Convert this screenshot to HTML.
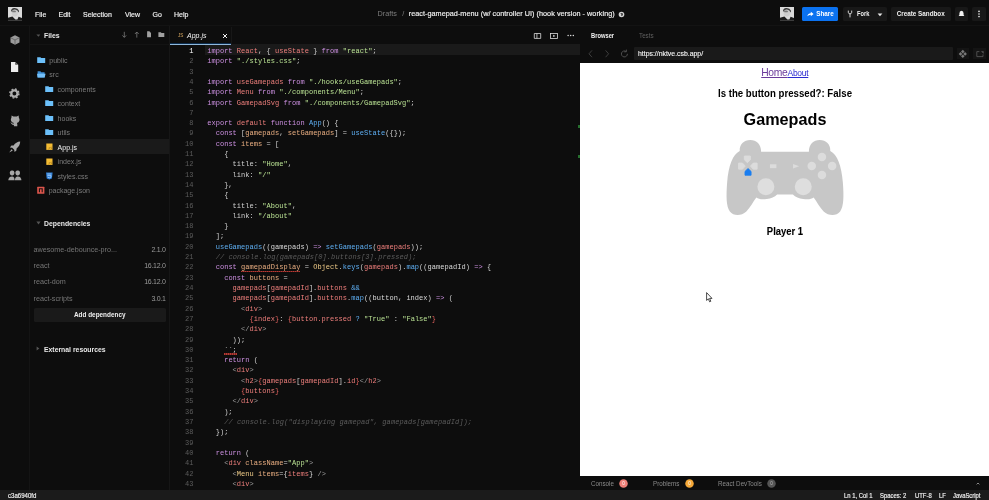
<!DOCTYPE html>
<html lang="en">
<head>
<meta charset="utf-8">
<title>react-gamepad-menu - CodeSandbox</title>
<style>
*{box-sizing:border-box;margin:0;padding:0}
html,body{width:989px;height:500px;overflow:hidden;background:#0d0d0d}
body{font-family:"Liberation Sans",sans-serif;font-size:7px;color:#ccc;position:relative;-webkit-font-smoothing:antialiased}
.a{position:absolute;white-space:nowrap}
.t{position:absolute;white-space:nowrap;line-height:10px;height:10px}
#hdr{left:0;top:0;width:989px;height:26px;background:#0d0d0d;border-bottom:1px solid #131313}
#act{left:0;top:26px;width:30px;height:464px;background:#0d0d0d;border-right:1px solid #141414}
#side{left:30px;top:26px;width:140px;height:464px;background:#0d0d0d;border-right:1px solid #161616}
#ed{left:170px;top:26px;width:410px;height:464px;background:#0d0d0d}
#status{left:0;top:490px;width:989px;height:10px;background:#1b1b1b}
#prev{left:580px;top:26px;width:409px;height:464px;background:#0d0d0d}
#white{left:580px;top:63px;width:409px;height:413px;background:#fff;color:#000}
.menu{color:#f0f0f0;font-size:7px;top:9.6px;-webkit-text-stroke:0.15px #f0f0f0}
.btn{position:absolute;top:7px;height:14px;border-radius:1.5px;background:#181818;color:#f0f0f0;font-size:6.3px;font-weight:bold;line-height:14.3px;text-align:center;white-space:nowrap}
.row{position:absolute;left:0;width:139px;height:14.5px}
.fn{position:absolute;font-size:7px;line-height:10px;color:#858585;white-space:nowrap}
.ln{position:absolute;left:170px;width:23.5px;text-align:right;font-family:"Liberation Mono",monospace;font-size:7px;line-height:10.3px;height:10.3px;color:#5c5c5c}
.ln.cur{color:#fff}
.cl{position:absolute;left:207.2px;font-family:"Liberation Mono",monospace;font-size:7px;line-height:10.3px;height:10.3px;white-space:pre;color:#d0d0d0;letter-spacing:0.035px}
.k{color:#cb8fe0}.v{color:#ee7f7c}.s{color:#b8e092}.f{color:#5eaef2}.o{color:#e8ad80}.y{color:#f0cc88}.p{color:#dadada}.b{color:#e0605c}
.cl .t{position:static;color:#ee7f7c;height:auto;line-height:inherit}
.g{color:#9c9c9c}
.c{color:#5c5c5c;font-style:italic;letter-spacing:0.075px}
.sq,.sq2{position:relative}
.sq::after,.sq2::after{content:'';position:absolute;left:0;right:0;top:7.6px;height:1.4px;background:repeating-linear-gradient(90deg,#b63a34 0,#b63a34 1px,#7a2622 1px,#7a2622 2px)}
.dep{position:absolute;left:4px;width:131.5px;height:10px;font-size:7px;line-height:10px;color:#8f8f8f}
.dep b{position:absolute;right:0;font-weight:normal}
.sb{position:absolute;top:491.4px;height:10px;line-height:10px;font-size:6.3px;color:#f4f4f4;white-space:nowrap;transform:scaleX(.935);transform-origin:0 0;-webkit-text-stroke:0.15px #f4f4f4}
.bt{position:absolute;top:478.7px;transform:scaleX(.95);transform-origin:0 0;height:10px;line-height:10px;font-size:6.6px;color:#8a8a8a;white-space:nowrap}
.badge{position:absolute;top:479.2px;width:8.6px;height:8.6px;border-radius:50%;font-size:4.6px;line-height:8.6px;text-align:center;color:#fff}
</style>
</head>
<body>
<div id="root" style="position:absolute;left:0;top:0;width:989px;height:500px;will-change:transform">
<div class="a" id="hdr"></div>
<div class="a" id="act"></div>
<div class="a" id="side"></div>
<div class="a" id="ed"></div>
<div class="a" id="prev"></div>
<div class="a" id="status"></div>

<!-- header -->
<svg class="a" style="left:8px;top:7.4px" width="14" height="13.4" viewBox="0 0 14 13.4">
  <rect width="14" height="13.4" fill="#dadada"/>
  <ellipse cx="6.8" cy="5.8" rx="3.2" ry="3.6" fill="#cdcdcd"/>
  <path d="M3 4.2 Q3.2 1.2 6 1 Q9.8 0.6 10.9 3.6 Q11.1 5 10.5 5.6 Q10 3 7 2.6 Q4.6 2.4 3.8 4.6Z" fill="#3c3c3c"/>
  <ellipse cx="6" cy="4.4" rx="2" ry="0.9" fill="#777"/>
  <path d="M0 13.4 V10.8 L4.4 9.6 L7.4 12.4 L9.4 12.6 L10.6 9.8 L14 11 V13.4Z" fill="#1c1c1c"/>
</svg>
<div class="t menu" style="left:35px">File</div>
<div class="t menu" style="left:58.5px">Edit</div>
<div class="t menu" style="left:83px">Selection</div>
<div class="t menu" style="left:125px">View</div>
<div class="t menu" style="left:152.5px">Go</div>
<div class="t menu" style="left:174px">Help</div>

<div class="t" style="left:377.6px;top:9.2px;font-size:7.25px;color:#7d7d7d">Drafts</div>
<div class="t" style="left:402.3px;top:9.2px;font-size:7.25px;color:#7d7d7d">/</div>
<div class="t" style="left:408.7px;top:9.2px;font-size:7.25px;letter-spacing:0.035px;color:#f2f2f2;-webkit-text-stroke:0.15px #f2f2f2">react-gamepad-menu (w/ controller UI) (hook version - working)</div>
<svg class="a" style="left:617.5px;top:10.8px" width="7" height="7" viewBox="0 0 7 7"><circle cx="3.5" cy="3.5" r="2.8" fill="#d0d0d0"/><path d="M2 2.2 L3.4 3 L3 4.4 L4.2 5 L5 3.4 L4.4 2Z" fill="#333"/></svg>

<svg class="a" style="left:780px;top:7.4px" width="14" height="13.4" viewBox="0 0 14 13.4">
  <rect width="14" height="13.4" fill="#dadada"/>
  <ellipse cx="6.8" cy="5.8" rx="3.2" ry="3.6" fill="#cdcdcd"/>
  <path d="M3 4.2 Q3.2 1.2 6 1 Q9.8 0.6 10.9 3.6 Q11.1 5 10.5 5.6 Q10 3 7 2.6 Q4.6 2.4 3.8 4.6Z" fill="#3c3c3c"/>
  <ellipse cx="6" cy="4.4" rx="2" ry="0.9" fill="#777"/>
  <path d="M0 13.4 V10.8 L4.4 9.6 L7.4 12.4 L9.4 12.6 L10.6 9.8 L14 11 V13.4Z" fill="#1c1c1c"/>
</svg>
<div class="btn" style="left:802px;width:36px;background:#0b72f0;color:#fff;padding-left:10px">Share</div>
<svg class="a" style="left:807px;top:11px" width="7" height="6" viewBox="0 0 7 6"><path d="M0.3 5.2 Q1 2.4 3.8 2.3 L3.8 0.8 L6.6 3 L3.8 5.2 L3.8 3.7 Q1.8 3.6 0.3 5.2Z" fill="#fff"/></svg>
<div class="btn" style="left:842.5px;width:44px"><span style="position:absolute;left:14px;transform:scaleX(.9);transform-origin:0 0">Fork</span></div>
<svg class="a" style="left:847.3px;top:10px" width="6" height="8" viewBox="0 0 6 8"><path d="M1.3 0.6 V2.4 Q1.3 3.6 3 3.9 Q4.7 3.6 4.7 2.4 V0.6 M3 3.9 V7.4" stroke="#e8e8e8" stroke-width="0.9" fill="none"/></svg>
<svg class="a" style="left:877px;top:13px" width="6" height="4" viewBox="0 0 6 4"><path d="M0.6 0.5 H5.4 L3 3.2Z" fill="#e8e8e8"/></svg>
<div class="btn" style="left:891px;width:59.5px">Create Sandbox</div>
<div class="btn" style="left:954.5px;width:13.5px"></div>
<svg class="a" style="left:958px;top:10px" width="7" height="8" viewBox="0 0 7 8"><path d="M3.5 0.8 Q5.6 1 5.6 3.4 V5 L6.4 6 H0.6 L1.4 5 V3.4 Q1.4 1 3.5 0.8Z" fill="#f2f2f2"/></svg>
<div class="btn" style="left:972px;width:13.5px"></div>
<svg class="a" style="left:977px;top:10px" width="4" height="8" viewBox="0 0 4 8"><circle cx="2" cy="1.4" r="0.8" fill="#f2f2f2"/><circle cx="2" cy="4" r="0.8" fill="#f2f2f2"/><circle cx="2" cy="6.6" r="0.8" fill="#f2f2f2"/></svg>

<!-- activity bar -->
<svg class="a" style="left:9.5px;top:34.6px" width="10" height="10" viewBox="0 0 10 10"><path d="M5 0.3 L9.5 2.6 V7.4 L5 9.8 L0.5 7.4 V2.6Z" fill="#9a9a9a"/><path d="M0.8 2.8 L5 5 L9.2 2.8 M5 5 V9.6" stroke="#4a4a4a" stroke-width="0.6" fill="none"/></svg>
<svg class="a" style="left:10px;top:61px" width="10" height="12" viewBox="0 0 10 12"><path d="M1 1 H5.2 L8.2 3.8 V11 H1Z" fill="#ececec"/><path d="M5.2 1 V3.8 H8.2Z" fill="#555"/></svg>
<svg class="a" style="left:9px;top:88.2px" width="11" height="11" viewBox="0 0 11 11"><circle cx="5.4" cy="5.5" r="3.1" fill="none" stroke="#adadad" stroke-width="2.3"/><circle cx="5.4" cy="5.5" r="4.5" fill="none" stroke="#adadad" stroke-width="1.5" stroke-dasharray="1.77 1.77"/></svg>
<svg class="a" style="left:10px;top:114.6px" width="11" height="12" viewBox="0 0 11 12"><path d="M1.6 0.6 L3.4 1.6 Q5.1 1.2 6.8 1.6 L8.6 0.6 L8.9 2.8 Q9.9 4.2 9.4 5.8 Q8.8 7.6 6.9 8 Q7.4 8.6 7.3 9.6 L7.3 11.2 H3.9 V9.8 Q2.2 10.3 1.4 8.8 Q1 8 0.3 7.6 Q1.4 7.2 2.2 8.2 Q2.8 8.9 3.6 8.6 Q3.7 8.2 3.9 8 Q1.6 7.6 1 5.8 Q0.5 4.2 1.4 2.8Z" fill="#a6a6a6"/></svg>
<svg class="a" style="left:9px;top:141.4px" width="12" height="12" viewBox="0 0 12 12"><path d="M11.2 0.6 C8.4 0.8 6.2 2.2 4.6 4.4 L2.4 4.6 L0.9 6.4 L3.2 6.8 L5.2 8.8 L5.6 11.1 L7.4 9.6 L7.6 7.4 C9.8 5.8 11.2 3.6 11.2 0.6Z M2.6 8.2 L0.2 11.4 L3.8 9.4Z" fill="#a8a8a8"/></svg>
<svg class="a" style="left:7.6px;top:169.6px" width="14" height="11" viewBox="0 0 14 11"><rect x="1.9" y="0.4" width="4.4" height="5" rx="1.8" fill="#a6a6a6"/><rect x="7.5" y="0.4" width="4.4" height="5" rx="1.8" fill="#a6a6a6"/><path d="M0.3 10.2 Q0.5 6.4 4.1 6.4 Q6.6 6.4 6.6 10.2Z" fill="#a6a6a6"/><path d="M6.9 10.2 Q7 6.4 9.7 6.4 Q13.3 6.4 13.4 10.2Z" fill="#a6a6a6"/></svg>

<!-- sidebar -->
<div class="a" style="left:30px;top:44px;width:139px;height:1px;background:#131313"></div>
<svg class="a" style="left:35.6px;top:33.8px" width="5" height="4" viewBox="0 0 5 4"><path d="M0.4 0.4 H4.4 L2.4 2.8Z" fill="#555"/></svg>
<div class="t" style="left:44px;top:30.8px;font-size:6.9px;font-weight:bold;color:#e8e8e8">Files</div>
<svg class="a" style="left:120px;top:30px" width="46" height="9" viewBox="0 0 46 9">
  <path d="M4.3 1.8 V7.2 M2.4 5.4 L4.3 7.4 L6.2 5.4" stroke="#8a8a8a" stroke-width="0.7" fill="none"/>
  <path d="M16.8 7.6 V2.2 M14.9 4 L16.8 2 L18.7 4" stroke="#8a8a8a" stroke-width="0.7" fill="none"/>
  <path d="M27.1 1.3 H29.4 L31 2.9 V7.2 H27.1Z" fill="#a0a0a0"/>
  <path d="M38.4 2.3 H40.8 L41.5 3.1 H44.3 V7.1 H38.4Z" fill="#a0a0a0"/>
</svg>

<div class="a" id="tree" style="left:30px;top:0;width:139px;height:0">
  <div class="row" style="top:139px;left:0;width:139px;height:15px;background:#1a1a1a"></div>
</div>
<svg class="a" style="left:37.0px;top:55.8px" width="9" height="8" viewBox="0 0 9 8"><path d="M0.2 1.2 H3.4 L4.2 2 H8.2 V7 H0.2Z" fill="#6cc0fa"/></svg>
<div class="fn" style="left:49.3px;top:56px;color:#7c7c7c">public</div>
<svg class="a" style="left:36.5px;top:70.3px" width="9" height="8" viewBox="0 0 9 8"><path d="M0.6 1.2 H3.4 L4.2 2.2 H7.6 V7.4 H0.6Z" fill="#3d8fd6"/><path d="M0 3.8 H8.6 L7.6 7.4 H0.6Z" fill="#74bff8"/></svg>
<div class="fn" style="left:49.3px;top:70px;color:#7c7c7c">src</div>
<svg class="a" style="left:45.3px;top:84.8px" width="9" height="8" viewBox="0 0 9 8"><path d="M0.2 1.2 H3.4 L4.2 2 H8.2 V7 H0.2Z" fill="#6cc0fa"/></svg>
<div class="fn" style="left:57.6px;top:85px;color:#7c7c7c">components</div>
<svg class="a" style="left:45.3px;top:99.3px" width="9" height="8" viewBox="0 0 9 8"><path d="M0.2 1.2 H3.4 L4.2 2 H8.2 V7 H0.2Z" fill="#6cc0fa"/></svg>
<div class="fn" style="left:57.6px;top:99px;color:#7c7c7c">context</div>
<svg class="a" style="left:45.3px;top:113.8px" width="9" height="8" viewBox="0 0 9 8"><path d="M0.2 1.2 H3.4 L4.2 2 H8.2 V7 H0.2Z" fill="#6cc0fa"/></svg>
<div class="fn" style="left:57.6px;top:114px;color:#7c7c7c">hooks</div>
<svg class="a" style="left:45.3px;top:128.3px" width="9" height="8" viewBox="0 0 9 8"><path d="M0.2 1.2 H3.4 L4.2 2 H8.2 V7 H0.2Z" fill="#6cc0fa"/></svg>
<div class="fn" style="left:57.6px;top:128px;color:#7c7c7c">utils</div>
<svg class="a" style="left:46.0px;top:143.4px" width="7" height="7" viewBox="0 0 7 7"><rect x="0.3" y="0.5" width="6.2" height="6.4" fill="#f4bc34"/><path d="M3.3 4 V5.6 Q3.2 6.2 2.5 6.1 M5.7 4.2 Q4.6 3.9 4.7 4.6 Q4.8 5 5.4 5.2 Q5.9 5.8 4.7 6" stroke="#8a6414" stroke-width="0.5" fill="none"/></svg>
<div class="fn" style="left:57.6px;top:143px;color:#f2f2f2">App.js</div>
<svg class="a" style="left:46.0px;top:157.9px" width="7" height="7" viewBox="0 0 7 7"><rect x="0.3" y="0.5" width="6.2" height="6.4" fill="#f4bc34"/><path d="M3.3 4 V5.6 Q3.2 6.2 2.5 6.1 M5.7 4.2 Q4.6 3.9 4.7 4.6 Q4.8 5 5.4 5.2 Q5.9 5.8 4.7 6" stroke="#8a6414" stroke-width="0.5" fill="none"/></svg>
<div class="fn" style="left:57.6px;top:157px;color:#7c7c7c">index.js</div>
<svg class="a" style="left:45.8px;top:171.8px" width="7" height="8" viewBox="0 0 7 8"><path d="M0 0.6 H6.6 L5.9 6.4 L3.3 7.4 L0.7 6.4Z" fill="#2f80d8"/><path d="M1.3 2 H5.3 M1.4 3.6 H5.1 L4.9 5.2 L3.3 5.8 L1.7 5.2" stroke="#bcdcff" stroke-width="0.7" fill="none"/></svg>
<div class="fn" style="left:57.6px;top:172px;color:#7c7c7c">styles.css</div>
<svg class="a" style="left:37.0px;top:186.3px" width="8" height="8" viewBox="0 0 8 8"><rect x="0.2" y="0.8" width="7.2" height="6.9" rx="0.5" fill="#dc564c"/><path d="M2.4 6.2 V2.8 H5.2 V6.2" stroke="#1a1010" stroke-width="1.1" fill="none"/></svg>
<div class="fn" style="left:48.7px;top:186px;color:#7c7c7c">package.json</div>
<svg class="a" style="left:35.5px;top:221px" width="5" height="4" viewBox="0 0 5 4"><path d="M0.4 0.6 H4.6 L2.5 3.4Z" fill="#555"/></svg>
<div class="t" style="left:44px;top:218.7px;font-size:6.85px;font-weight:bold;color:#e8e8e8">Dependencies</div>
<div class="fn" style="left:33.5px;top:245.2px;font-size:7.2px;color:#767676">awesome-debounce-pro...</div>
<div class="fn" style="left:100px;width:65.5px;text-align:right;top:245.2px;letter-spacing:-0.3px;color:#9a9a9a">2.1.0</div>
<div class="fn" style="left:33.5px;top:260.9px;font-size:7.2px;color:#767676">react</div>
<div class="fn" style="left:100px;width:65.5px;text-align:right;top:260.9px;letter-spacing:-0.3px;color:#9a9a9a">16.12.0</div>
<div class="fn" style="left:33.5px;top:277.2px;font-size:7.2px;color:#767676">react-dom</div>
<div class="fn" style="left:100px;width:65.5px;text-align:right;top:277.2px;letter-spacing:-0.3px;color:#9a9a9a">16.12.0</div>
<div class="fn" style="left:33.5px;top:293.6px;font-size:7.2px;color:#767676">react-scripts</div>
<div class="fn" style="left:100px;width:65.5px;text-align:right;top:293.6px;letter-spacing:-0.3px;color:#9a9a9a">3.0.1</div>
<div class="a" style="left:33.5px;top:307.5px;width:132.5px;height:14px;background:#1a1a1a;border-radius:1.5px;color:#f0f0f0;font-size:6.4px;font-weight:bold;line-height:14.6px;text-align:center">Add dependency</div>
<svg class="a" style="left:36px;top:346px" width="4" height="5" viewBox="0 0 4 5"><path d="M0.6 0.4 V4.6 L3.4 2.5Z" fill="#555"/></svg>
<div class="t" style="left:44px;top:344.5px;font-size:6.85px;font-weight:bold;color:#e8e8e8">External resources</div>

<!-- editor tabs -->
<div class="a" style="left:205px;top:44px;width:375px;height:11px;background:#1a1a1a"></div>
<div class="a" style="left:170px;top:43px;width:61px;height:1px;background:#0c2c4c"></div>
<div class="a" style="left:170px;top:44px;width:61px;height:1px;background:#8fb8dc"></div>
<div class="t" style="left:178px;top:31.3px;font-size:4.6px;color:#d8a860">JS</div>
<div class="t" style="left:187px;top:31px;font-size:7px;font-style:italic;color:#f4f4f4">App.js</div>
<svg class="a" style="left:222px;top:33px" width="6" height="6" viewBox="0 0 6 6"><path d="M1 1 L5 5 M5 1 L1 5" stroke="#f0f0f0" stroke-width="1" fill="none"/></svg>
<div class="a" style="left:231px;top:27px;width:1px;height:17px;background:#171717"></div>
<svg class="a" style="left:533px;top:31px" width="44" height="9" viewBox="0 0 44 9">
  <path d="M1.3 2.5 H7.7 V7.4 H1.3Z M3.9 2.5 V7.4" stroke="#dcdcdc" stroke-width="0.8" fill="none"/>
  <rect x="17.5" y="2.5" width="7" height="4.9" stroke="#dcdcdc" stroke-width="0.8" fill="none"/><path d="M20.2 3.8 L22.4 4.95 L20.2 6.1Z" fill="#dcdcdc"/>
  <circle cx="35.1" cy="4.6" r="0.75" fill="#dcdcdc"/><circle cx="37.7" cy="4.6" r="0.75" fill="#dcdcdc"/><circle cx="40.3" cy="4.6" r="0.75" fill="#dcdcdc"/>
</svg>
<div class="ln cur" style="top:46.00px">1</div>
<div class="cl" style="top:46.00px"><span class="k">import</span> <span class="v">React</span>, { <span class="v">useState</span> } <span class="k">from</span> <span class="s">"react"</span>;</div>
<div class="ln" style="top:56.30px">2</div>
<div class="cl" style="top:56.30px"><span class="k">import</span> <span class="s">"./styles.css"</span>;</div>
<div class="ln" style="top:66.61px">3</div>
<div class="ln" style="top:76.91px">4</div>
<div class="cl" style="top:76.91px"><span class="k">import</span> <span class="v">useGamepads</span> <span class="k">from</span> <span class="s">"./hooks/useGamepads"</span>;</div>
<div class="ln" style="top:87.22px">5</div>
<div class="cl" style="top:87.22px"><span class="k">import</span> <span class="v">Menu</span> <span class="k">from</span> <span class="s">"./components/Menu"</span>;</div>
<div class="ln" style="top:97.53px">6</div>
<div class="cl" style="top:97.53px"><span class="k">import</span> <span class="v">GamepadSvg</span> <span class="k">from</span> <span class="s">"./components/GamepadSvg"</span>;</div>
<div class="ln" style="top:107.83px">7</div>
<div class="ln" style="top:118.13px">8</div>
<div class="cl" style="top:118.13px"><span class="k">export</span> <span class="v">default</span> <span class="k">function</span> <span class="f">App</span>() {</div>
<div class="ln" style="top:128.44px">9</div>
<div class="cl" style="top:128.44px">  <span class="k">const</span> [<span class="o">gamepads</span>, <span class="o">setGamepads</span>] = <span class="f">useState</span>({});</div>
<div class="ln" style="top:138.75px">10</div>
<div class="cl" style="top:138.75px">  <span class="k">const</span> <span class="o">items</span> = [</div>
<div class="ln" style="top:149.05px">11</div>
<div class="cl" style="top:149.05px">    {</div>
<div class="ln" style="top:159.35px">12</div>
<div class="cl" style="top:159.35px">      title: <span class="s">"Home"</span>,</div>
<div class="ln" style="top:169.66px">13</div>
<div class="cl" style="top:169.66px">      link: <span class="s">"/"</span></div>
<div class="ln" style="top:179.97px">14</div>
<div class="cl" style="top:179.97px">    },</div>
<div class="ln" style="top:190.27px">15</div>
<div class="cl" style="top:190.27px">    {</div>
<div class="ln" style="top:200.57px">16</div>
<div class="cl" style="top:200.57px">      title: <span class="s">"About"</span>,</div>
<div class="ln" style="top:210.88px">17</div>
<div class="cl" style="top:210.88px">      link: <span class="s">"/about"</span></div>
<div class="ln" style="top:221.19px">18</div>
<div class="cl" style="top:221.19px">    }</div>
<div class="ln" style="top:231.49px">19</div>
<div class="cl" style="top:231.49px">  ];</div>
<div class="ln" style="top:241.79px">20</div>
<div class="cl" style="top:241.79px">  <span class="f">useGamepads</span>((<span class="p">gamepads</span>) <span class="k">=&gt;</span> <span class="f">setGamepads</span>(<span class="v">gamepads</span>));</div>
<div class="ln" style="top:252.10px">21</div>
<div class="cl" style="top:252.10px">  <span class="c">// console.log(gamepads[0].buttons[3].pressed);</span></div>
<div class="ln" style="top:262.40px">22</div>
<div class="cl" style="top:262.40px">  <span class="k">const</span> <span class="o sq">gamepadDisplay</span> = <span class="y">Object</span>.<span class="f">keys</span>(<span class="v">gamepads</span>).<span class="f">map</span>((<span class="p">gamepadId</span>) <span class="k">=&gt;</span> {</div>
<div class="ln" style="top:272.71px">23</div>
<div class="cl" style="top:272.71px">    <span class="k">const</span> <span class="o">buttons</span> =</div>
<div class="ln" style="top:283.01px">24</div>
<div class="cl" style="top:283.01px">      <span class="v">gamepads</span>[<span class="v">gamepadId</span>].<span class="v">buttons</span> <span class="f">&amp;&amp;</span></div>
<div class="ln" style="top:293.32px">25</div>
<div class="cl" style="top:293.32px">      <span class="v">gamepads</span>[<span class="v">gamepadId</span>].<span class="v">buttons</span>.<span class="f">map</span>((<span class="p">button</span>, <span class="p">index</span>) <span class="k">=&gt;</span> (</div>
<div class="ln" style="top:303.62px">26</div>
<div class="cl" style="top:303.62px">        <span class="g">&lt;</span><span class="t">div</span><span class="g">&gt;</span></div>
<div class="ln" style="top:313.93px">27</div>
<div class="cl" style="top:313.93px">          <span class="b">{</span><span class="v">index</span><span class="b">}</span>: <span class="b">{</span><span class="v">button.pressed</span> <span class="f">?</span> <span class="s">"True"</span> : <span class="s">"False"</span><span class="b">}</span></div>
<div class="ln" style="top:324.24px">28</div>
<div class="cl" style="top:324.24px">        <span class="g">&lt;/</span><span class="t">div</span><span class="g">&gt;</span></div>
<div class="ln" style="top:334.54px">29</div>
<div class="cl" style="top:334.54px">      ));</div>
<div class="ln" style="top:344.84px">30</div>
<div class="cl" style="top:344.84px">    <span class="d sq2">``;</span></div>
<div class="ln" style="top:355.15px">31</div>
<div class="cl" style="top:355.15px">    <span class="k">return</span> (</div>
<div class="ln" style="top:365.45px">32</div>
<div class="cl" style="top:365.45px">      <span class="g">&lt;</span><span class="t">div</span><span class="g">&gt;</span></div>
<div class="ln" style="top:375.76px">33</div>
<div class="cl" style="top:375.76px">        <span class="g">&lt;</span><span class="t">h2</span><span class="g">&gt;</span><span class="b">{</span><span class="v">gamepads</span>[<span class="v">gamepadId</span>].<span class="v">id</span><span class="b">}</span><span class="g">&lt;/</span><span class="t">h2</span><span class="g">&gt;</span></div>
<div class="ln" style="top:386.06px">34</div>
<div class="cl" style="top:386.06px">        <span class="b">{</span><span class="v">buttons</span><span class="b">}</span></div>
<div class="ln" style="top:396.37px">35</div>
<div class="cl" style="top:396.37px">      <span class="g">&lt;/</span><span class="t">div</span><span class="g">&gt;</span></div>
<div class="ln" style="top:406.68px">36</div>
<div class="cl" style="top:406.68px">    );</div>
<div class="ln" style="top:416.98px">37</div>
<div class="cl" style="top:416.98px">    <span class="c">// console.log("displaying gamepad", gamepads[gamepadId]);</span></div>
<div class="ln" style="top:427.28px">38</div>
<div class="cl" style="top:427.28px">  });</div>
<div class="ln" style="top:437.59px">39</div>
<div class="ln" style="top:447.89px">40</div>
<div class="cl" style="top:447.89px">  <span class="k">return</span> (</div>
<div class="ln" style="top:458.20px">41</div>
<div class="cl" style="top:458.20px">    <span class="g">&lt;</span><span class="t">div</span> <span class="o">className</span>=<span class="s">"App"</span><span class="g">&gt;</span></div>
<div class="ln" style="top:468.50px">42</div>
<div class="cl" style="top:468.50px">      <span class="g">&lt;</span><span class="y">Menu</span> <span class="o">items</span>=<span class="p">{</span><span class="v">items</span><span class="p">}</span> <span class="g">/&gt;</span></div>
<div class="ln" style="top:478.81px">43</div>
<div class="cl" style="top:478.81px">      <span class="g">&lt;</span><span class="t">div</span><span class="g">&gt;</span></div>
<div class="a" style="left:578px;top:125px;width:2px;height:3px;background:#26702e"></div>
<div class="a" style="left:578px;top:155px;width:2px;height:3px;background:#26702e"></div>

<!-- preview -->
<div class="t" style="left:590.7px;top:30.7px;font-size:6.8px;font-weight:bold;color:#f0f0f0;transform:scaleX(.85);transform-origin:0 0">Browser</div>
<div class="t" style="left:638.8px;top:30.7px;font-size:6.8px;color:#606060;transform:scaleX(.92);transform-origin:0 0">Tests</div>
<svg class="a" style="left:586px;top:48px" width="46" height="12" viewBox="0 0 46 12">
  <path d="M6 2.4 L3 5.8 L6 9.2" stroke="#444" stroke-width="0.9" fill="none"/>
  <path d="M19.6 2.4 L22.6 5.8 L19.6 9.2" stroke="#444" stroke-width="0.9" fill="none"/>
  <path d="M41.4 5.8 A3 3 0 1 1 40 3.4 M40.4 1.6 V3.8 H38.2" stroke="#555" stroke-width="0.9" fill="none"/>
</svg>
<div class="a" style="left:634px;top:47px;width:319px;height:13px;background:#1a1a1a;border-radius:1px"></div>
<div class="t" style="left:638px;top:48.6px;font-size:6.9px;color:#f4f4f4;-webkit-text-stroke:0.12px #f4f4f4">https://nktve.csb.app/</div>
<div class="a" style="left:957px;top:48px;width:12px;height:11px;background:#141414"></div>
<div class="a" style="left:973px;top:48px;width:13px;height:11px;background:#141414"></div>
<svg class="a" style="left:957px;top:48px" width="29" height="12" viewBox="0 0 29 12">
  <path d="M5.8 1.8 L7.6 3.6 L5.8 5.4 L4 3.6Z M5.8 6.4 L7.6 8.2 L5.8 10 L4 8.2Z M3.5 4.1 L5.3 5.9 L3.5 7.7 L1.7 5.9Z M8.1 4.1 L9.9 5.9 L8.1 7.7 L6.3 5.9Z" fill="#787878"/>
  <path d="M22.4 3.6 H19.8 V8.6 H26 V6.4" stroke="#5c5c5c" stroke-width="0.8" fill="none"/><path d="M24 3.2 H26.6 V5.8Z" fill="#5c5c5c"/>
</svg>
<div class="a" id="white"></div>
<div class="t" style="left:761.2px;top:67px;line-height:12px;height:12px;font-size:10.3px;letter-spacing:-0.28px"><span style="color:#6a3a9a;text-decoration:underline;text-decoration-thickness:0.6px;text-underline-offset:0.6px">Home</span><span style="font-size:8.5px;color:#2a2ad0;text-decoration:underline;text-decoration-thickness:0.6px;text-underline-offset:0.6px;letter-spacing:-0.3px">About</span></div>
<div class="t" style="left:581px;width:408px;text-align:center;top:88px;font-size:10px;line-height:12px;height:12px;font-weight:bold;color:#000;transform:scaleX(.965)">Is the button pressed?: False</div>
<div class="t" style="left:581px;width:408px;text-align:center;top:108px;font-size:16.2px;line-height:22px;height:22px;font-weight:bold;color:#000">Gamepads</div>
<svg class="a" style="left:720px;top:135px" width="130" height="85" viewBox="0 0 765 500">
<path d="M382.5 98 L242 98 C242 55 215 30 178 30 C141 30 114 55 116 94 C75 115 50 180 42 280 C36 360 36 420 58 450 C80 478 125 478 155 450 C180 425 195 392 214 368 C226 378 250 381 275 376 C300 374 322 366 336 350 L382.5 350 L429 350 C443 366 465 374 490 376 C515 381 539 378 551 368 C570 392 585 425 610 450 C640 478 685 478 707 450 C729 420 729 360 723 280 C715 180 690 115 649 94 C651 55 624 30 587 30 C550 30 523 55 523 98 L382.5 98 Z" fill="#c7c7c7"/>
<circle cx="270" cy="305" r="50" fill="#dedede"/><circle cx="490" cy="305" r="50" fill="#dedede"/>
<circle cx="600" cy="130" r="25" fill="#dcdcdc"/><circle cx="600" cy="236" r="25" fill="#dcdcdc"/>
<circle cx="540" cy="183" r="25" fill="#dcdcdc"/><circle cx="660" cy="183" r="25" fill="#dcdcdc"/>
<path d="M140 120 H182 V146 L161 166 L140 146Z" fill="#dcdcdc" stroke="#dcdcdc" stroke-width="6" stroke-linejoin="round" transform="translate(161 143) scale(.85) translate(-161 -143)"/>
<path d="M106 162 H133 L152 183 L133 204 H106Z" fill="#dcdcdc" stroke="#dcdcdc" stroke-width="6" stroke-linejoin="round" transform="translate(129 183) scale(.85) translate(-129 -183)"/>
<path d="M222 162 H195 L176 183 L195 204 H222Z" fill="#dcdcdc" stroke="#dcdcdc" stroke-width="6" stroke-linejoin="round" transform="translate(199 183) scale(.85) translate(-199 -183)"/>
<path d="M144 240 H186 V214 L165 194 L144 214Z" fill="#1a7df0" stroke="#1a7df0" stroke-width="6" stroke-linejoin="round" transform="translate(165 217) scale(.85) translate(-165 -217)"/>
<rect x="294" y="172" width="38" height="23" fill="#dcdcdc"/>
<path d="M430 171 L466 184 L430 197Z" fill="#dcdcdc"/>
</svg>
<div class="t" style="left:581px;width:408px;text-align:center;top:225.6px;font-size:10px;line-height:12px;height:12px;font-weight:bold;color:#000;transform:scaleX(.945);-webkit-text-stroke:0.1px #000">Player 1</div>
<svg class="a" style="left:706px;top:291.9px" width="7" height="11" viewBox="0 0 7 11"><path d="M0.6 0.6 V8.4 L2.4 6.8 L3.6 9.8 L4.8 9.3 L3.6 6.4 H6Z" fill="#fff" stroke="#000" stroke-width="0.7"/></svg>

<!-- bottom tabs -->
<div class="bt" style="left:590.7px">Console</div>
<svg class="a" style="left:619.3px;top:479px" width="9" height="9" viewBox="0 0 9 9"><circle cx="4.5" cy="4.5" r="4.25" fill="#ee8078"/><text x="4.5" y="6.1" text-anchor="middle" font-family="Liberation Sans, sans-serif" font-size="4.6" fill="#fff">0</text></svg>
<div class="bt" style="left:652.8px">Problems</div>
<svg class="a" style="left:684.6px;top:479px" width="9" height="9" viewBox="0 0 9 9"><circle cx="4.5" cy="4.5" r="4.25" fill="#f5a838"/><text x="4.5" y="6.1" text-anchor="middle" font-family="Liberation Sans, sans-serif" font-size="4.6" fill="#fff">0</text></svg>
<div class="bt" style="left:718px">React DevTools</div>
<svg class="a" style="left:766.6px;top:479px" width="9" height="9" viewBox="0 0 9 9"><circle cx="4.5" cy="4.5" r="4.25" fill="#555"/><text x="4.5" y="6.1" text-anchor="middle" font-family="Liberation Sans, sans-serif" font-size="4.6" fill="#bbb">0</text></svg>
<svg class="a" style="left:975px;top:481px" width="6" height="5" viewBox="0 0 6 5"><path d="M1.6 3.4 L3 2 L4.4 3.4" stroke="#aaa" stroke-width="0.8" fill="none"/></svg>

<!-- status bar -->
<div class="sb" style="left:7.9px;transform:scaleX(.967)">c3a6940fd</div>
<div class="sb" style="left:843.6px">Ln 1, Col 1</div>
<div class="sb" style="left:880px">Spaces: 2</div>
<div class="sb" style="left:914.5px">UTF-8</div>
<div class="sb" style="left:938.5px">LF</div>
<div class="sb" style="left:953px">JavaScript</div>
</div>
</body>
</html>
